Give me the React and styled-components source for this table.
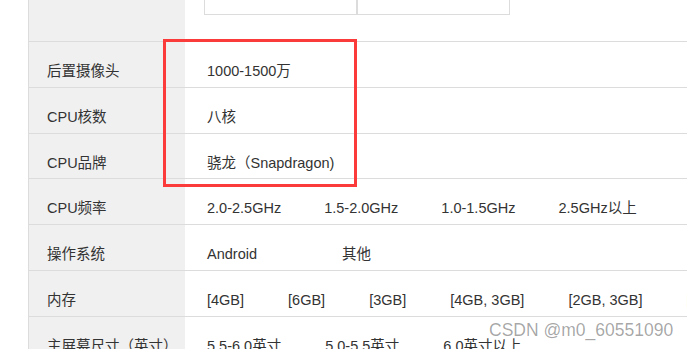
import React from "react";
import styled, { createGlobalStyle } from "styled-components";

const Global = createGlobalStyle`
  html, body { margin: 0; padding: 0; background: #fff; overflow: hidden; }
  body { font-family: "Liberation Sans", "Noto Sans CJK SC", sans-serif; }
`;

const Page = styled.div`
  position: relative;
  width: 687px;
  height: 349px;
  overflow: hidden;
  padding-left: 28px;
  box-sizing: border-box;
`;

const Table = styled.div`
  border-left: 1px solid #dcdcdc;
  display: flex;
  flex-direction: column;
`;

const Row = styled.div`
  display: flex;
  height: ${(p) => p.$h}px;
  box-sizing: border-box;
  border-bottom: 1px solid #dcdcdc;
`;

const Label = styled.div`
  flex: 0 0 156px;
  background: #f0f0f0;
  padding: 19px 0 0 18px;
  box-sizing: border-box;
  font-size: 14.5px;
  line-height: 20px;
  color: #333;
  white-space: nowrap;
`;

const Values = styled.div`
  flex: 1;
  display: flex;
  gap: ${(p) => p.$gap}px;
  padding: 19px 0 0 22px;
  font-size: 14.5px;
  line-height: 20px;
  color: #333;
  white-space: nowrap;
`;

const ThumbRow = styled.div`
  flex: 1;
  display: flex;
  align-items: flex-start;
  padding-left: 19px;
`;

const Thumb = styled.div`
  width: 153px;
  height: 15px;
  box-sizing: border-box;
  border: 1px solid #dcdcdc;
  border-top: none;
`;

const Highlight = styled.div`
  position: absolute;
  left: 163px;
  top: 39px;
  width: 194px;
  height: 148px;
  box-sizing: border-box;
  border: 3px solid #fb3a3a;
  pointer-events: none;
`;

const Watermark = styled.div`
  position: absolute;
  left: 489px;
  top: 318px;
  font-family: "Liberation Sans", "Noto Sans", sans-serif;
  font-size: 17.5px;
  line-height: 24px;
  color: rgba(0, 0, 0, 0.36);
  text-shadow: 0 0 2px #fff, 0 0 1px #fff;
  white-space: nowrap;
`;

const rows = [
  { label: "后置摄像头", h: 46, items: ["1000-1500万"] },
  { label: "CPU核数", h: 46, items: ["八核"] },
  { label: "CPU品牌", h: 45, items: ["骁龙（Snapdragon)"] },
  { label: "CPU频率", h: 46, gap: 43, items: ["2.0-2.5GHz", "1.5-2.0GHz", "1.0-1.5GHz", "2.5GHz以上"] },
  { label: "操作系统", h: 46, gap: 85, items: ["Android", "其他"] },
  { label: "内存", h: 46, gap: 44, items: ["[4GB]", "[6GB]", "[3GB]", "[4GB, 3GB]", "[2GB, 3GB]", "[2GB, 4GB]"] },
  { label: "主屏幕尺寸（英寸）", h: 46, gap: 44, items: ["5.5-6.0英寸", "5.0-5.5英寸", "6.0英寸以上"] },
];

export default function App() {
  return (
    <>
      <Global />
      <Page>
        <Table>
          <Row $h={42}>
            <Label />
            <ThumbRow>
              <Thumb />
              <Thumb />
            </ThumbRow>
          </Row>
          {rows.map((r) => (
            <Row key={r.label} $h={r.h}>
              <Label>{r.label}</Label>
              <Values $gap={r.gap || 44}>
                {r.items.map((it) => (
                  <span key={it}>{it}</span>
                ))}
              </Values>
            </Row>
          ))}
        </Table>
        <Highlight />
        <Watermark>CSDN @m0_60551090</Watermark>
      </Page>
    </>
  );
}
